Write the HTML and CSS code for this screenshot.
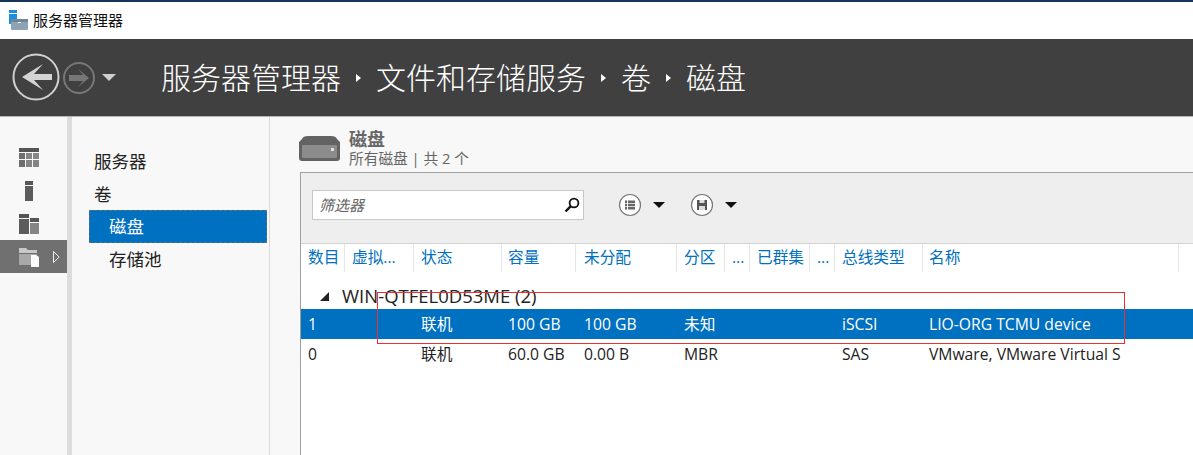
FILE: index.html
```html
<!DOCTYPE html>
<html lang="zh">
<head>
<meta charset="utf-8">
<title>服务器管理器</title>
<link rel="stylesheet" href="styles.css">
</head>
<body>
<div class="app">
  <div class="titlebar">
    <svg class="app-icon" width="20" height="20" viewBox="0 0 20 20">
      <rect x="1" y="0" width="8" height="3" fill="#1c8fdc"/>
      <rect x="1" y="4" width="8" height="10" fill="#1c8fdc"/>
      <rect x="3" y="9" width="17" height="11" rx="1" fill="#8ea3b5"/>
      <rect x="3" y="9" width="17" height="3" fill="#6f8496"/>
      <rect x="10" y="12" width="3" height="1" fill="#fff"/>
    </svg>
    <span>服务器管理器</span>
  </div>
  <header class="header">
    <div class="nav-buttons">
      <svg width="50" height="50" viewBox="0 0 50 50">
        <circle cx="24" cy="24" r="22.5" fill="none" stroke="#d0d0d0" stroke-width="2"/>
        <path d="M10 24 L31 11 L22 21 L40 21 L40 27 L22 27 L31 37 Z" fill="#d4d4d4"/>
      </svg>
      <svg class="fwd" width="34" height="34" viewBox="0 0 34 34">
        <circle cx="17" cy="17" r="15" fill="none" stroke="#777" stroke-width="2"/>
        <path d="M27 17 L16 8 L21 14 L7 14 L7 20 L21 20 L16 26 Z" fill="#777"/>
      </svg>
      <span class="drop"></span>
    </div>
    <nav class="crumbs">
      <span>服务器管理器</span><i class="sep"></i>
      <span>文件和存储服务</span><i class="sep"></i>
      <span>卷</span><i class="sep"></i>
      <span>磁盘</span>
    </nav>
  </header>
  <div class="body">
    <aside class="rail">
      <div class="rail-item">
        <svg width="20" height="20" viewBox="0 0 20 20" fill="#6e6e6e"><rect width="20" height="4" fill="#555"/><rect y="5" width="6" height="6"/><rect x="7" y="5" width="6" height="6" fill="#858585"/><rect x="14" y="5" width="6" height="6" fill="#858585"/><rect y="12" width="6" height="7"/><rect x="7" y="12" width="6" height="7" fill="#858585"/><rect x="14" y="12" width="6" height="7" fill="#858585"/></svg>
      </div>
      <div class="rail-item">
        <svg width="20" height="20" viewBox="0 0 20 20"><rect x="6" y="0" width="8" height="4" fill="#555"/><rect x="6" y="5" width="8" height="15" fill="#5c5c5c"/></svg>
      </div>
      <div class="rail-item">
        <svg width="20" height="20" viewBox="0 0 20 20"><rect y="0" width="10" height="4" fill="#555"/><rect y="5" width="10" height="15" fill="#5c5c5c"/><rect x="11" y="4" width="9" height="4" fill="#555"/><rect x="11" y="9" width="9" height="11" fill="#858585"/></svg>
      </div>
      <div class="rail-item active">
        <svg width="20" height="20" viewBox="0 0 20 20"><path d="M0 1h7l2 2h9v3H0z" fill="#c8c8c8"/><path d="M0 7h18v11H0z" fill="#a8a8a8"/><path d="M12 8h5l3 2v10h-8z" fill="#fff"/></svg>
        <svg class="rail-arrow" width="7" height="12" viewBox="0 0 7 12"><path d="M.5.5 6.2 6 .5 11.5z" fill="none" stroke="#eee"/></svg>
      </div>
    </aside>
    <div class="strip"></div>
    <nav class="side">
      <div class="side-item">服务器</div>
      <div class="side-item">卷</div>
      <div class="side-item sub selected">磁盘</div>
      <div class="side-item sub">存储池</div>
    </nav>
    <main class="main">
      <div class="heading">
        <svg class="disk" width="41" height="25" viewBox="0 0 41 25">
          <path d="M3 3 Q4 0 9 0 H32 Q37 0 38 3 L41 6 V22 Q41 25 38 25 H3 Q0 25 0 22 V6 Z" fill="#636363"/>
          <rect x="3" y="9" width="35" height="13" rx="1" fill="#8c8c8c"/>
          <rect x="32" y="12" width="3" height="3" fill="#e2e2e2"/>
        </svg>
        <div class="heading-text">
          <div class="heading-title">磁盘</div>
          <div class="heading-sub">所有磁盘 | 共 2 个</div>
        </div>
      </div>
      <section class="panel">
        <div class="toolbar">
          <div class="filter">
            <span>筛选器</span>
            <svg width="16" height="16" viewBox="0 0 16 16"><circle cx="10" cy="6" r="4.4" fill="none" stroke="#111" stroke-width="1.8"/><path d="M6.8 9.2 1.5 14.5" stroke="#111" stroke-width="2.4"/></svg>
          </div>
          <div class="tool">
            <svg width="24" height="24" viewBox="0 0 24 24"><circle cx="12" cy="12" r="10.5" fill="#fff" stroke="#777" stroke-width="1.2"/><path d="M7 7.5h2v2.4H7zM10 7.5h7v2.4h-7zM7 10.8h2v2.4H7zM10 10.8h7v2.4h-7zM7 14.1h2v2.4H7zM10 14.1h7v2.4h-7z" fill="#666"/></svg>
            <span class="caret"></span>
          </div>
          <div class="tool">
            <svg width="24" height="24" viewBox="0 0 24 24"><circle cx="12" cy="12" r="10.5" fill="#fff" stroke="#777" stroke-width="1.2"/><path d="M7 7h10v10H7z" fill="#555"/><rect x="9.5" y="7" width="5" height="3" fill="#ddd"/><rect x="9" y="13" width="6" height="4" fill="#ddd"/></svg>
            <span class="caret"></span>
          </div>
        </div>
        <div class="row head">
          <div>数目</div><div>虚拟...</div><div>状态</div><div>容量</div><div>未分配</div><div>分区</div><div>...</div><div>已群集</div><div>...</div><div>总线类型</div><div>名称</div><div></div>
        </div>
        <div class="group"><span class="tri"></span>WIN-QTFEL0D53ME (2)</div>
        <div class="row data sel">
          <div>1</div><div></div><div>联机</div><div>100 GB</div><div>100 GB</div><div>未知</div><div></div><div></div><div></div><div>iSCSI</div><div>LIO-ORG TCMU device</div><div></div>
        </div>
        <div class="row data">
          <div>0</div><div></div><div>联机</div><div>60.0 GB</div><div>0.00 B</div><div>MBR</div><div></div><div></div><div></div><div>SAS</div><div>VMware, VMware Virtual S</div><div></div>
        </div>
      </section>
    </main>
  </div>
  <div class="redbox"></div>
</div>
</body>
</html>
```
FILE: styles.css
```css
* { box-sizing: border-box; }
html, body { margin: 0; height: 100%; overflow: hidden; }
body { font-family: "Open Sans", "Noto Sans CJK SC", sans-serif; color: #222; background: #f8f8f8; }
.app { position: relative; width: 1193px; height: 455px; overflow: hidden; display: flex; flex-direction: column; }

.titlebar { height: 39px; flex: none; background: #fff; border-top: 2px solid #14345a; display: flex; align-items: center; padding: 0 0 2px 8px; gap: 5px; font-size: 15px; color: #111; font-family: "Noto Sans CJK SC", sans-serif; }
.app-icon { flex: none; }

.header { height: 78px; flex: none; background: #404040; border-bottom: 1px solid #b4b4b4; display: flex; align-items: center; color: #fff; padding-left: 12px; }
.nav-buttons { display: flex; align-items: center; width: 149px; }
.fwd { margin-left: 0; }
.drop { width: 0; height: 0; margin-left: 6px; border-left: 7px solid transparent; border-right: 7px solid transparent; border-top: 7px solid #cfcfcf; }
.crumbs { display: flex; align-items: center; padding-bottom: 3px; font-family: "Noto Sans CJK SC", sans-serif; font-size: 30px; font-weight: 300; line-height: 38px; }
.sep { width: 0; height: 0; margin: 3px 15px 0; border-top: 4.5px solid transparent; border-bottom: 4.5px solid transparent; border-left: 5px solid #fff; }

.body { flex: 1; display: flex; min-height: 0; }
.rail { width: 67px; flex: none; padding-top: 24px; display: flex; flex-direction: column; }
.rail-item { height: 33px; display: flex; align-items: center; padding-left: 19px; position: relative; }
.rail-item.active { background: #707070; }
.rail-arrow { margin-left: 14px; }
.strip { width: 5px; flex: none; background: #dcdcdc; }

.side { width: 198px; flex: none; border-right: 1px solid #d9d9d9; padding: 27px 2px 0 17px; font-family: "Noto Sans CJK SC", sans-serif; font-size: 17.5px; }
.side-item { height: 33px; line-height: 33px; padding-left: 5px; color: #222; }
.side-item.sub { padding-left: 20px; line-height: 31px; }
.selected { background: #0070c0; color: #fff; outline: 1px dashed #5a6f80; outline-offset: -1px; }

.main { flex: 1; min-width: 0; padding: 13px 0 0 30px; display: flex; flex-direction: column; }
.heading { display: flex; height: 42px; align-items: center; gap: 9px; flex: none; padding-bottom: 5px; }
.disk { margin-left: -1px; }
.heading-text { font-family: "Open Sans", "Noto Sans CJK SC", sans-serif; }
.heading-title { font-size: 18px; font-weight: 700; color: #666; line-height: 19px; }
.heading-sub { font-size: 14.7px; color: #666; line-height: 19px; }

.panel { flex: 1; border: 1px solid #a0a0a0; border-bottom: none; border-right: none; background: #fff; min-width: 0; }
.toolbar { height: 71px; background: #eeeeee; border-bottom: 1px solid #d4d4d4; display: flex; align-items: flex-start; padding: 17px 0 0 11px; }
.filter { width: 272px; height: 30px; background: #fff; border: 1px solid #c8c8c8; display: flex; align-items: center; justify-content: space-between; padding: 0 3px 2px 6px; font-size: 15px; font-style: italic; color: #666; font-family: "Noto Sans CJK SC", sans-serif; margin-right: 34px; }
.filter svg { margin-top: 2px; }
.tool { display: flex; align-items: center; gap: 11px; height: 30px; margin-right: 25px; }
.caret { width: 0; height: 0; border-left: 6.5px solid transparent; border-right: 6.5px solid transparent; border-top: 6.5px solid #111; }

.row { display: grid; grid-template-columns: 44px 69px 88px 74px 101px 48px 25px 60px 25px 88px 256px 1fr; font-size: 15.7px; }
.row > div { padding-left: 7px; white-space: nowrap; overflow: hidden; }
.row > div:first-child { padding-left: 7px; }
.row > div:nth-child(4) { padding-left: 6px; }
.row > div:nth-child(5) { padding-left: 8px; }
.row > div:nth-child(11) { padding-left: 6px; }
.head { height: 28px; line-height: 26px; color: #0070c0; background: #fff; }
.head > div { border-right: 1px solid #e6e6e6; }
.head > div:last-child { border-right: none; }
.group { height: 37px; padding: 11px 0 0 19px; font-size: 18.5px; line-height: 26px; color: #222; display: flex; align-items: center; }
.tri { width: 0; height: 0; margin-right: 13px; border-left: 9px solid transparent; border-bottom: 9px solid #222; }
.data { height: 30px; line-height: 30px; color: #222; }
.sel { background: #0070c0; color: #fff; }

.redbox { position: absolute; left: 377px; top: 292px; width: 748px; height: 52px; border: 1px solid #f03030; pointer-events: none; }
```
